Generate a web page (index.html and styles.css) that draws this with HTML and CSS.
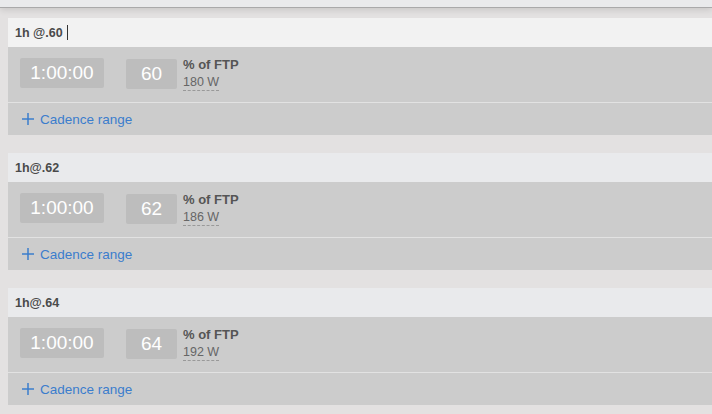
FILE: index.html
```html
<!DOCTYPE html>
<html lang="en">
<head>
    <meta charset="UTF-8">
    <title>Workout Intervals</title>
    <link rel="stylesheet" href="styles.css">
</head>
<body>
    <div class="topbar"></div>

    <div class="step-list">
        <!-- Step 1 -->
        <div class="step">
            <div class="step-header active">
                <span class="step-name">1h @.60</span><span class="caret"></span>
            </div>
            <div class="step-body">
                <div class="field time">1:00:00</div>
                <div class="field pct">60</div>
                <div class="pct-info">
                    <div class="pct-label">% of FTP</div>
                    <div class="watts">180 W</div>
                </div>
            </div>
            <div class="cadence">
                <svg class="plus" width="12" height="12" viewBox="0 0 12 12"><path d="M6 0V12M0 6H12" /></svg>Cadence range
            </div>
        </div>

        <!-- Step 2 -->
        <div class="step">
            <div class="step-header">
                <span class="step-name">1h@.62</span>
            </div>
            <div class="step-body">
                <div class="field time">1:00:00</div>
                <div class="field pct">62</div>
                <div class="pct-info">
                    <div class="pct-label">% of FTP</div>
                    <div class="watts">186 W</div>
                </div>
            </div>
            <div class="cadence">
                <svg class="plus" width="12" height="12" viewBox="0 0 12 12"><path d="M6 0V12M0 6H12" /></svg>Cadence range
            </div>
        </div>

        <!-- Step 3 -->
        <div class="step">
            <div class="step-header">
                <span class="step-name">1h@.64</span>
            </div>
            <div class="step-body">
                <div class="field time">1:00:00</div>
                <div class="field pct">64</div>
                <div class="pct-info">
                    <div class="pct-label">% of FTP</div>
                    <div class="watts">192 W</div>
                </div>
            </div>
            <div class="cadence">
                <svg class="plus" width="12" height="12" viewBox="0 0 12 12"><path d="M6 0V12M0 6H12" /></svg>Cadence range
            </div>
        </div>
    </div>
</body>
</html>
```

FILE: styles.css
```css
body {
    margin: 0;
    font-family: 'Liberation Sans', Arial, sans-serif;
    background-color: #e3e1e1;
    color: #444;
    overflow: hidden;
}

.topbar {
    height: 7px;
    background-color: #e9eaec;
    border-bottom: 1px solid #a9a9aa;
    box-shadow: 0 2px 6px rgba(0, 0, 0, 0.12);
}

.step-list {
    display: flex;
    flex-direction: column;
    gap: 18px;
    padding: 10px 0 0 8px;
}

.step {
    background-color: #cccccc;
}

.step-header {
    display: flex;
    align-items: center;
    height: 29px;
    padding-left: 7px;
    background-color: #e9eaec;
}

.step-header.active {
    background-color: #f2f2f2;
}

.step-name {
    font-size: 12.5px;
    font-weight: bold;
    color: #4a4a4a;
}

.caret {
    display: inline-block;
    width: 1px;
    height: 15px;
    margin-left: 4px;
    background-color: #333;
}

.step-body {
    display: flex;
    align-items: flex-start;
    height: 56px;
    padding: 11px 0 0 12px;
    box-sizing: border-box;
    border-bottom: 1px solid #e2e2e2;
}

.field {
    height: 30px;
    line-height: 30px;
    background-color: #bdbdbd;
    border-radius: 2px;
    color: #fff;
    font-size: 19px;
    text-align: center;
}

.time {
    width: 84px;
}

.pct {
    width: 51px;
    margin: 1px 0 0 22px;
}

.pct-info {
    margin: 0 0 0 6px;
}

.pct-label {
    font-size: 13px;
    font-weight: bold;
    color: #555;
    line-height: 14px;
}

.watts {
    display: inline-block;
    font-size: 12.5px;
    color: #666;
    line-height: 12px;
    padding-bottom: 2px;
    border-bottom: 1px dashed #999;
}

.cadence {
    display: flex;
    align-items: center;
    height: 32px;
    padding-left: 14px;
    color: #3b7dcc;
    font-size: 13.5px;
}

.plus {
    margin-right: 6px;
    stroke: #3b7dcc;
    stroke-width: 1.5;
    fill: none;
}
```
